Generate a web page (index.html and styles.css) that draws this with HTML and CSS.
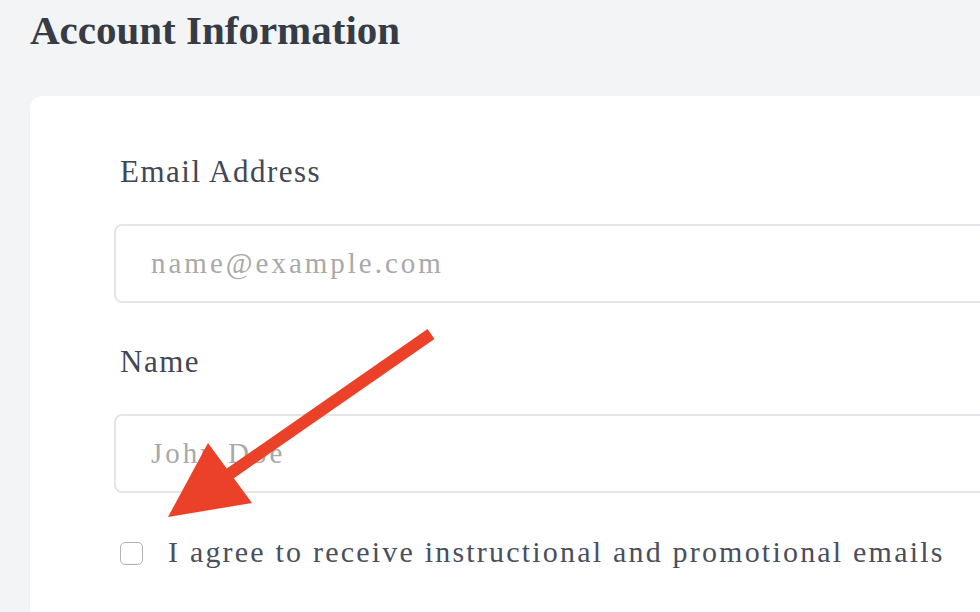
FILE: index.html
```html
<!DOCTYPE html>
<html lang="en">
<head>
    <meta charset="UTF-8">
    <meta name="viewport" content="width=device-width, initial-scale=1.0">
    <title>Account Information</title>
    <link rel="stylesheet" href="styles.css">
</head>
<body>

    <h1 class="page-title">Account Information</h1>

    <div class="card">
        <div class="field">
            <label class="field-label" for="email">Email Address</label>
            <input class="field-input" type="text" id="email" placeholder="name@example.com">
        </div>
        <div class="field">
            <label class="field-label" for="name">Name</label>
            <input class="field-input" type="text" id="name" placeholder="John Doe">
        </div>
        <label class="agree">
            <input class="agree-box" type="checkbox">
            <span>I agree to receive instructional and promotional emails</span>
        </label>
    </div>

    <!-- annotation arrow -->
    <svg class="arrow" width="980" height="612" viewBox="0 0 980 612">
        <line x1="431" y1="334" x2="228" y2="475" stroke="#eb4129" stroke-width="12"/>
        <polygon points="168,517 208,443 252,503" fill="#eb4129"/>
    </svg>

</body>
</html>
```

FILE: styles.css
```css
body {
    font-family: 'Liberation Serif', serif;
    margin: 0;
    padding: 0 0 0 30px;
    background-color: #f3f4f6;
    color: #374151;
    overflow: hidden;
    height: 612px;
    position: relative;
}

.page-title {
    margin: 0;
    padding-top: 7px;
    font-size: 41px;
    font-weight: bold;
    line-height: 47px;
    color: #363b45;
}

.card {
    margin-top: 42px;
    width: 1100px;
    height: 600px;
    background-color: white;
    border-radius: 12px;
    box-shadow: 0 1px 3px rgba(0, 0, 0, 0.05);
    padding: 58px 0 0 84px;
}

.field-label {
    display: block;
    padding-left: 6px;
    font-size: 31px;
    letter-spacing: 1.5px;
    line-height: 36px;
    color: #414755;
}

.field-input {
    display: block;
    margin-top: 34px;
    margin-bottom: 41px;
    width: 100%;
    height: 79px;
    box-sizing: border-box;
    padding: 0 35px;
    border: 2px solid #e3e5e9;
    border-radius: 8px;
    font-family: 'Liberation Serif', serif;
    font-size: 29px;
    letter-spacing: 3px;
    color: #374151;
    outline: none;
}

.field-input::placeholder {
    color: #a9a9a9;
}

.agree {
    display: flex;
    align-items: flex-start;
    gap: 25px;
    padding-left: 6px;
    font-size: 30px;
    line-height: 36px;
    letter-spacing: 2.2px;
    color: #4a4f5c;
}

.agree-box {
    appearance: none;
    margin: 8px 0 0 0;
    width: 23px;
    height: 23px;
    border: 1px solid #b3b3b3;
    border-radius: 5px;
    background-color: white;
    box-shadow: inset 0 -1px 1px rgba(0, 0, 0, 0.04);
}

.arrow {
    position: absolute;
    left: 0;
    top: 0;
}
```
